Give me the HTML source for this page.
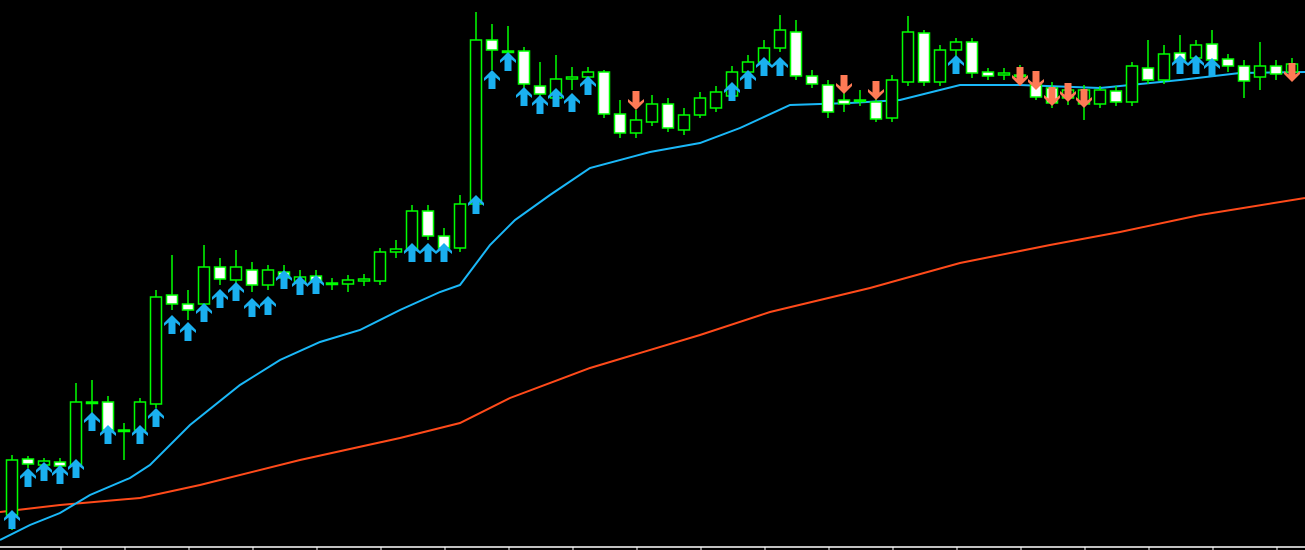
<!DOCTYPE html><html><head><style>html,body{margin:0;padding:0;background:#000;width:1305px;height:550px;overflow:hidden}</style></head><body>
<svg width="1305" height="550" viewBox="0 0 1305 550" xmlns="http://www.w3.org/2000/svg">
<defs>
<path id="up" d="M0 0 L8 8 L8 11 L3.5 7.5 L3.5 19 L-3.5 19 L-3.5 7.5 L-8 11 L-8 8 Z" fill="#1ab0f0"/>
<path id="dn" d="M0 0 L8 -8 L8 -11 L3.5 -7.5 L3.5 -19 L-3.5 -19 L-3.5 -7.5 L-8 -11 L-8 -8 Z" fill="#ff7a55"/>
</defs>
<polyline fill="none" stroke="#ff4a1a" stroke-width="2" points="0,512 60,505 140,498 200,485 300,460 400,438 460,423 510,398 590,368 700,335 770,312 870,288 960,263 1050,245 1120,232 1200,215 1305,198"/>
<polyline fill="none" stroke="#1ab8f8" stroke-width="2" points="0,540 30,525 60,513 90,495 130,478 150,465 190,425 240,385 280,360 320,342 360,330 400,310 440,292 460,285 490,245 515,220 550,195 590,168 650,152 700,143 740,128 790,105 850,103 900,100 960,85 1020,85 1100,88 1180,80 1240,73 1305,72"/>
<g id="c" stroke="#00ff00" stroke-width="1.5"></g>
<g stroke="#fff" stroke-width="1.5"><line x1="0" y1="547" x2="1305" y2="547"/></g>
<g stroke="#fff" stroke-width="1">
<line x1="61" y1="547" x2="61" y2="550"/><line x1="125" y1="547" x2="125" y2="550"/><line x1="189" y1="547" x2="189" y2="550"/><line x1="253" y1="547" x2="253" y2="550"/><line x1="317" y1="547" x2="317" y2="550"/><line x1="381" y1="547" x2="381" y2="550"/><line x1="445" y1="547" x2="445" y2="550"/><line x1="509" y1="547" x2="509" y2="550"/><line x1="573" y1="547" x2="573" y2="550"/><line x1="637" y1="547" x2="637" y2="550"/><line x1="701" y1="547" x2="701" y2="550"/><line x1="765" y1="547" x2="765" y2="550"/><line x1="829" y1="547" x2="829" y2="550"/><line x1="893" y1="547" x2="893" y2="550"/><line x1="957" y1="547" x2="957" y2="550"/><line x1="1021" y1="547" x2="1021" y2="550"/><line x1="1085" y1="547" x2="1085" y2="550"/><line x1="1149" y1="547" x2="1149" y2="550"/><line x1="1213" y1="547" x2="1213" y2="550"/><line x1="1277" y1="547" x2="1277" y2="550"/>
</g>
<g id="ar"></g>
</svg>
<script>
var C=[[12,460,515,455,530,'g'],[28,459,464,456,468,'w'],[44,461,465,458,470,'g'],[60,462,466,458,470,'w'],[76,402,465,383,470,'g'],[92,402,403,380,430,'g'],[108,402,430,396,435,'w'],[124,430,431,423,460,'g'],[140,402,430,398,435,'g'],[156,297,404,290,408,'g'],[172,295,304,255,310,'w'],[188,304,310,290,320,'w'],[204,267,304,245,308,'g'],[220,267,279,258,285,'w'],[236,267,280,250,285,'g'],[252,270,285,262,292,'w'],[268,270,285,265,290,'g'],[284,272,278,265,282,'w'],[300,277,283,270,288,'g'],[316,276,282,270,288,'w'],[332,283,284,278,290,'g'],[348,280,284,275,292,'g'],[364,279,281,274,286,'g'],[380,252,281,248,285,'g'],[396,249,252,240,258,'g'],[412,211,250,205,255,'g'],[428,211,236,205,240,'w'],[444,236,248,228,252,'w'],[460,204,248,195,252,'g'],[476,40,204,12,210,'g'],[492,40,50,24,70,'w'],[508,51,52,26,70,'g'],[524,51,84,47,90,'w'],[540,86,94,62,100,'w'],[556,79,98,55,102,'g'],[572,77,79,67,90,'g'],[588,72,77,67,82,'g'],[604,72,114,70,118,'w'],[620,114,133,100,138,'w'],[636,120,133,110,138,'g'],[652,104,122,95,126,'g'],[668,104,128,98,132,'w'],[684,115,130,108,135,'g'],[700,98,115,92,118,'g'],[716,92,108,86,112,'g'],[732,72,96,66,100,'g'],[748,62,72,55,76,'g'],[764,48,62,40,66,'g'],[780,30,48,15,52,'g'],[796,32,76,20,80,'w'],[812,76,84,70,88,'w'],[828,85,112,80,118,'w'],[844,100,104,90,112,'w'],[860,100,101,90,106,'g'],[876,102,119,95,122,'w'],[892,80,118,75,122,'g'],[908,32,82,16,86,'g'],[924,33,82,30,86,'w'],[940,50,82,45,86,'g'],[956,42,50,38,60,'g'],[972,42,73,38,78,'w'],[988,72,76,68,80,'w'],[1004,73,75,68,80,'g'],[1020,75,76,65,82,'g'],[1036,85,97,78,100,'w'],[1052,88,103,82,108,'w'],[1068,90,98,84,105,'g'],[1084,90,104,85,120,'g'],[1100,90,104,86,108,'g'],[1116,91,102,86,106,'w'],[1132,66,102,62,106,'g'],[1148,68,80,40,84,'w'],[1164,54,80,45,84,'g'],[1180,53,60,35,66,'w'],[1196,45,58,40,62,'g'],[1212,44,60,30,66,'w'],[1228,59,66,54,72,'w'],[1244,66,81,60,98,'w'],[1260,66,77,42,90,'g'],[1276,66,74,60,80,'w'],[1292,64,72,58,80,'g']];
var s='';C.forEach(function(c){s+='<line x1="'+c[0]+'" y1="'+c[3]+'" x2="'+c[0]+'" y2="'+c[4]+'"/>';var h=Math.max(c[2]-c[1],1.5);s+='<rect x="'+(c[0]-5.5)+'" y="'+c[1]+'" width="11" height="'+h+'" fill="'+(c[5]=='w'?'#fff':'#000')+'"/>';});
document.getElementById('c').innerHTML=s;
var U=[[12,510],[28,468],[44,462],[60,465],[76,459],[92,412],[108,425],[140,425],[156,408],[172,315],[188,322],[204,303],[220,289],[236,282],[252,298],[268,296],[284,270],[300,276],[316,275],[412,243],[428,243],[444,243],[476,195],[492,70],[508,52],[524,87],[540,95],[556,88],[572,93],[588,76],[732,82],[748,70],[764,57],[780,57],[956,55],[1180,55],[1196,55],[1212,58]];
var D=[[636,110],[844,94],[876,100],[1020,86],[1036,90],[1052,106],[1068,102],[1084,108],[1292,82]];
var a='';U.forEach(function(p){a+='<use href="#up" x="'+p[0]+'" y="'+p[1]+'"/>';});D.forEach(function(p){a+='<use href="#dn" x="'+p[0]+'" y="'+p[1]+'"/>';});
document.getElementById('ar').innerHTML=a;
</script>
</body></html>
